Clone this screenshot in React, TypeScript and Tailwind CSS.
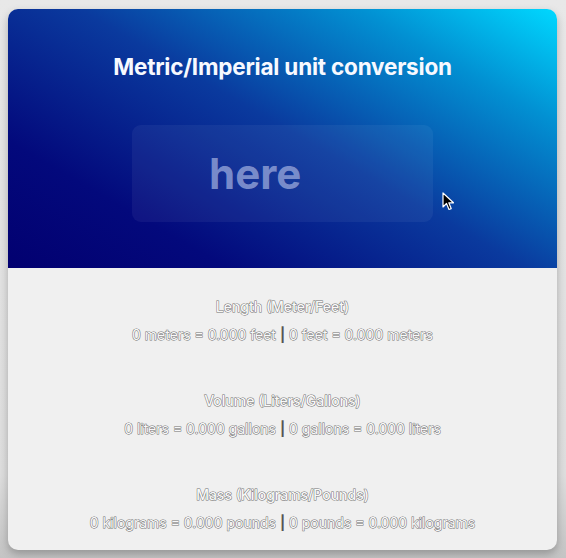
import React from 'react';

const conversions = [
  { title: 'Length (Meter/Feet)', a: '0 meters = 0.000 feet', b: '0 feet = 0.000 meters' },
  { title: 'Volume (Liters/Gallons)', a: '0 liters = 0.000 gallons', b: '0 gallons = 0.000 liters' },
  { title: 'Mass (Kilograms/Pounds)', a: '0 kilograms = 0.000 pounds', b: '0 pounds = 0.000 kilograms' },
];

const outlined =
  'text-[#f8f8f8] [-webkit-text-stroke:1px_#707070] [paint-order:stroke_fill]';

const Cursor = () => (
  <svg width="13" height="19" viewBox="0 0 13 19" className="absolute left-[434px] top-[183px]">
    <path d="M1 1 L1 15 L4.5 11.5 L7 17.5 L9.2 16.6 L6.8 10.8 L11.5 10.8 Z" fill="#000" stroke="#fff" strokeWidth="1.2" strokeLinejoin="round" />
  </svg>
);

export default function App() {
  return (
    <div className="w-[566px] h-[558px] bg-[linear-gradient(180deg,#e8e8e8_0%,#dedede_85%,#c4c4c4_100%)] pt-[9px] pl-[8px] font-['Inter',sans-serif]">
      <div className="w-[549px] h-[541px] rounded-[10px] overflow-hidden bg-[#f0f0f0] shadow-[0_4px_8px_rgba(0,0,0,0.25)] flex flex-col">
        <header className="relative shrink-0 h-[259px] bg-[linear-gradient(30deg,#020070_0%,#03097c_22%,#0a3a9e_52%,#0290d2_80%,#00d8ff_100%)] flex flex-col items-center">
          <h1 className="mt-[44px] text-[22.5px] leading-[28px] font-bold text-[#f7f9ff] tracking-[-0.2px]">
            Metric/Imperial unit conversion
          </h1>
          <div className="mt-[44px] w-[301px] h-[97px] rounded-[9px] bg-white/[0.05] flex items-center pl-[77px]">
            <span className="text-[42px] font-bold leading-none text-[#8798d2]/90 pt-[1px]">here</span>
          </div>
          <Cursor />
        </header>
        <section className="flex flex-col items-center pt-[29px]">
          {conversions.map((c) => (
            <div key={c.title} className="h-[94px] flex flex-col items-center">
              <h2 className={`text-[14px] leading-[20px] font-medium ${outlined}`}>{c.title}</h2>
              <p className={`mt-[8px] text-[14px] leading-[20px] ${outlined}`}>
                {c.a} <span className="text-[#555] [-webkit-text-stroke:0] font-bold">|</span> {c.b}
              </p>
            </div>
          ))}
        </section>
      </div>
    </div>
  );
}
